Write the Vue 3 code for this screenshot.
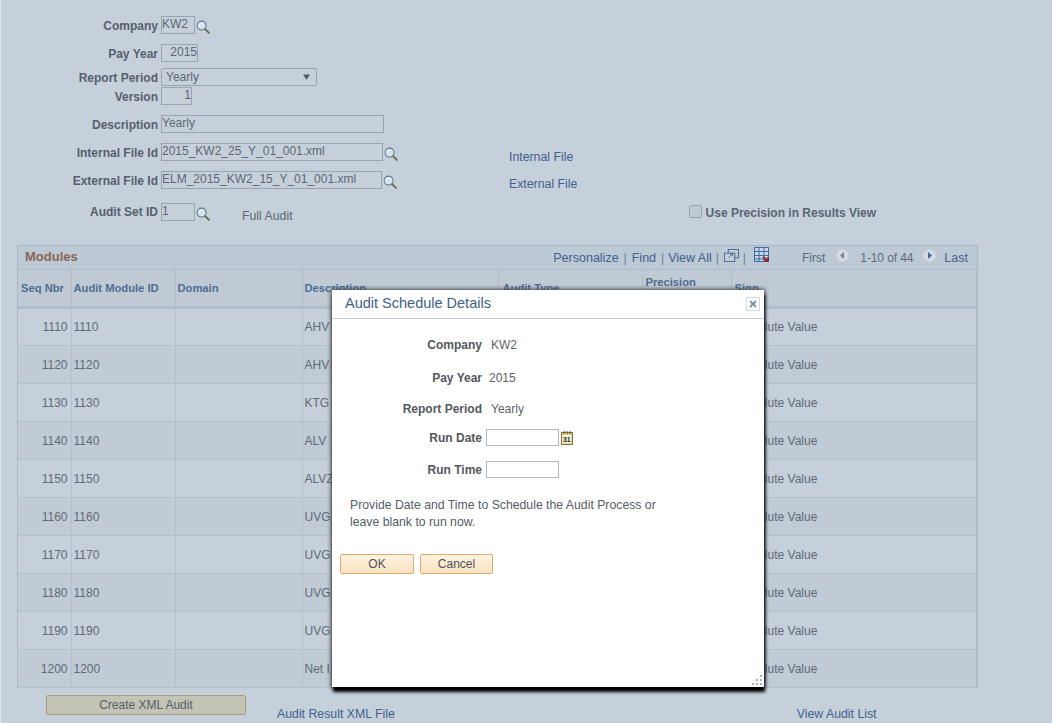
<script setup>
import { ref } from 'vue'

const rows = ref([
  { seq: 1110, desc: 'AHV' },
  { seq: 1120, desc: 'AHV' },
  { seq: 1130, desc: 'KTG' },
  { seq: 1140, desc: 'ALV' },
  { seq: 1150, desc: 'ALVZ' },
  { seq: 1160, desc: 'UVG' },
  { seq: 1170, desc: 'UVG' },
  { seq: 1180, desc: 'UVG' },
  { seq: 1190, desc: 'UVG' },
  { seq: 1200, desc: 'Net I' },
])
</script>

<template>
  <div class="page">
    <!-- 图标定义 -->
    <svg class="defs" aria-hidden="true">
      <symbol id="lens" viewBox="0 0 15 15">
        <circle cx="6" cy="6" r="4.800" fill="#d3e2ee" stroke="#5f7486" stroke-width="1.100" />
        <path d="M3.500 5.500a3 3 0 0 1 3-2.500" fill="none" stroke="#f4f8fb" stroke-width="1" />
        <path d="M9.800 9.800l4 4" stroke="#5f6f45" stroke-width="2" stroke-linecap="round" />
      </symbol>
    </svg>

    <!-- 表单区 -->
    <div class="row r-company">
      <label class="lab">Company</label>
      <div class="field w34">KW2</div>
      <svg class="lens"><use href="#lens" /></svg>
    </div>
    <div class="row r-year">
      <label class="lab">Pay Year</label>
      <div class="field w37 num">2015</div>
    </div>
    <div class="row r-period">
      <label class="lab">Report Period</label>
      <div class="field w156 select">
        <span>Yearly</span>
        <svg class="arrow" viewBox="0 0 8 6"><path d="M0 0h8L4 6z" fill="#4f5a66" /></svg>
      </div>
    </div>
    <div class="row r-version">
      <label class="lab">Version</label>
      <div class="field w31 num">1</div>
    </div>
    <div class="row r-desc">
      <label class="lab">Description</label>
      <div class="field w223">Yearly</div>
    </div>
    <div class="row r-internal">
      <label class="lab">Internal File Id</label>
      <div class="field w222">2015_KW2_25_Y_01_001.xml</div>
      <svg class="lens"><use href="#lens" /></svg>
      <a class="link file-link internal">Internal File</a>
    </div>
    <div class="row r-external">
      <label class="lab">External File Id</label>
      <div class="field w221">ELM_2015_KW2_15_Y_01_001.xml</div>
      <svg class="lens"><use href="#lens" /></svg>
      <a class="link file-link external">External File</a>
    </div>
    <div class="row r-set">
      <label class="lab">Audit Set ID</label>
      <div class="field w34">1</div>
      <svg class="lens"><use href="#lens" /></svg>
      <span class="full-audit">Full Audit</span>
      <span class="check-wrap">
        <span class="check"></span>
        <span class="lab-inline">Use Precision in Results View</span>
      </span>
    </div>

    <!-- Modules 表格 -->
    <div class="grid">
      <div class="grid-bar">
        <span class="grid-title">Modules</span>
        <div class="grid-nav">
          <a class="link">Personalize</a><i class="sep">|</i>
          <a class="link">Find</a><i class="sep sep-r">|</i>
          <a class="link">View All</a><i class="sep sep-l">|</i>
          <svg class="nav-ico" viewBox="0 0 16 14">
            <rect x="4.500" y="0.500" width="11" height="9" fill="none" stroke="#46688f" />
            <rect x="0.500" y="4.500" width="11" height="9" fill="#c3cdd8" stroke="#46688f" />
            <path d="M5 9l4-4M6.500 5H9v2.500" fill="none" stroke="#46688f" />
          </svg>
          <i class="sep sep-l">|</i>
          <svg class="nav-grid" viewBox="0 0 16 16">
            <rect x="0.500" y="0.500" width="14" height="14" fill="#ccd6e2" stroke="#3f6aa6" />
            <path d="M0 4.500h15M0 8.500h15M0 12h15M5 0v15M10 0v15" stroke="#3f6aa6" />
            <path d="M9 10l4 3M14 10v4h-4" fill="none" stroke="#93202a" stroke-width="1.600" />
          </svg>
          <span class="pg first">First</span>
          <svg class="pg-ico prev" viewBox="0 0 15 15">
            <circle cx="7.500" cy="7.500" r="7" fill="#d2dae3" stroke="#b8c3ce" />
            <path d="M9 4v7L5 7.500z" fill="#7b8793" />
          </svg>
          <span class="pg count">1-10 of 44</span>
          <svg class="pg-ico next" viewBox="0 0 15 15">
            <circle cx="7.500" cy="7.500" r="7" fill="#d2dae3" stroke="#b8c3ce" />
            <path d="M6 4v7l4-3.500z" fill="#46688f" />
          </svg>
          <a class="link">Last</a>
        </div>
      </div>
      <table class="tbl">
        <colgroup>
          <col style="width: 53px" />
          <col style="width: 104px" />
          <col style="width: 127px" />
          <col style="width: 196px" />
          <col style="width: 144px" />
          <col style="width: 89px" />
          <col />
        </colgroup>
        <thead>
          <tr>
            <th class="th-seq">Seq Nbr</th>
            <th>Audit Module ID</th>
            <th>Domain</th>
            <th>Description</th>
            <th class="th-type">Audit Type</th>
            <th class="th-up">Precision</th>
            <th class="th-seq">Sign</th>
          </tr>
        </thead>
        <tbody>
          <tr v-for="(r, i) in rows" :key="r.seq" :class="{ odd: i % 2 === 1 }">
            <td class="seq">{{ r.seq }}</td>
            <td>{{ r.seq }}</td>
            <td></td>
            <td>{{ r.desc }}</td>
            <td></td>
            <td></td>
            <td class="sign">Absolute Value</td>
          </tr>
        </tbody>
      </table>
    </div>

    <!-- 底部按钮 -->
    <div class="foot">
      <button class="xml-btn">Create XML Audit</button>
      <a class="link foot-a">Audit Result XML File</a>
      <a class="link foot-b">View Audit List</a>
    </div>

    <!-- 弹窗 -->
    <div class="dialog">
      <div class="dlg-head">
        <span class="dlg-title">Audit Schedule Details</span>
        <span class="dlg-close">
          <svg viewBox="0 0 8 8" width="8" height="8"><path d="M1 1l6 6M7 1l-6 6" stroke="#7d8fa3" stroke-width="1.800" /></svg>
        </span>
      </div>
      <div class="dlg-body">
        <div class="d-row m16">
          <label class="d-lab">Company</label><span class="d-val">KW2</span>
        </div>
        <div class="d-row m14">
          <label class="d-lab">Pay Year</label><span class="d-val year">2015</span>
        </div>
        <div class="d-row m12">
          <label class="d-lab">Report Period</label><span class="d-val">Yearly</span>
        </div>
        <div class="d-row m15">
          <label class="d-lab">Run Date</label><input class="d-input" />
          <svg class="cal" viewBox="0 0 12 14">
            <rect x="0.500" y="1.500" width="11" height="12" fill="#e3cf95" stroke="#8a7440" />
            <rect x="1.500" y="4" width="8.500" height="8" fill="#fdf7df" />
            <path d="M3 0v3M6 0v3M9 0v3" stroke="#5b4a22" />
            <text x="5.800" y="10.800" text-anchor="middle" class="cal-num">31</text>
          </svg>
        </div>
        <div class="d-row">
          <label class="d-lab">Run Time</label><input class="d-input" />
        </div>
        <p class="d-note">Provide Date and Time to Schedule the Audit Process or<br />leave blank to run now.</p>
        <div class="d-btns">
          <button class="d-btn ok">OK</button>
          <button class="d-btn cancel">Cancel</button>
        </div>
      </div>
      <svg class="grip" viewBox="0 0 12 12" width="12" height="12">
        <path d="M9 1h2v2H9zM5 5h2v2H5zM9 5h2v2H9zM1 9h2v2H1zM5 9h2v2H5zM9 9h2v2H9z" fill="#a9b1ba" />
      </svg>
    </div>
  </div>
</template>

<style scoped>
.page {
  position: relative;
  height: 723px;
  overflow: hidden;
  box-sizing: border-box;
  border-left: 1px solid #e2e6ea;
  background: #c6d0da;
  font-family: "Liberation Sans", Arial, sans-serif;
  font-size: 12px;
  color: #5c6775;
}

.defs {
  position: absolute;
  width: 0;
  height: 0;
}

.row {
  display: flex;
  align-items: center;
  height: 18px;
}

.r-company { padding-top: 16px; }
.r-year { margin-top: 10px; }
.r-period { margin-top: 6px; }
.r-version { margin-top: 1px; }
.r-desc { margin-top: 10px; }
.r-internal { margin-top: 10px; }
.r-external { margin-top: 10px; }
.r-set { margin-top: 14px; }

.lab {
  width: 160px;
  padding: 2px 3px 0 0;
  box-sizing: border-box;
  text-align: right;
  font-weight: bold;
  color: #565f6d;
}

.r-set .lab {
  padding-top: 0;
}

.field {
  height: 18px;
  box-sizing: border-box;
  border: 1px solid #98a4b0;
  line-height: 14px;
  color: #5c6775;
  white-space: nowrap;
}

.w31 { width: 31px; }
.w34 { width: 34px; }
.w37 { width: 37px; }
.w156 { width: 156px; }
.w221 { width: 221px; }
.w222 { width: 222px; }
.w223 { width: 223px; }

.num {
  text-align: right;
}

.select {
  display: flex;
  align-items: center;
  justify-content: space-between;
  border-radius: 2px;
  padding: 0 6px 0 4px;
}

.arrow {
  width: 7px;
  height: 6px;
}

.lens {
  width: 14px;
  height: 14px;
  margin: 3px 0 0 1px;
}

.link {
  font-size: 12.300px;
  color: #40608f;
  white-space: nowrap;
}

.file-link {
  align-self: flex-start;
  padding-top: 7px;
}

.internal {
  margin-left: 111px;
}

.external {
  margin-left: 112px;
  padding-top: 6px;
}

.full-audit {
  align-self: flex-start;
  margin-left: 32px;
  padding-top: 6px;
  font-size: 12.300px;
  white-space: nowrap;
}

.check-wrap {
  display: flex;
  align-items: center;
  margin-left: 396px;
  padding-top: 2px;
}

.check {
  width: 11px;
  height: 11px;
  margin-bottom: 4px;
  border: 1px solid #98a3ae;
  border-radius: 2px;
  background: #c1cad4;
}

.lab-inline {
  margin-left: 4px;
  font-weight: bold;
  white-space: nowrap;
  color: #5a6472;
}

.grid {
  width: 961px;
  margin: 24px 0 0 16px;
  box-sizing: border-box;
  border: 1px solid #aab7c4;
  border-bottom: none;
}

.grid-bar {
  display: flex;
  align-items: center;
  justify-content: space-between;
  height: 23px;
  background: #bdc9d4;
}

.grid-title {
  margin: 0 0 3px 7px;
  font-size: 13px;
  font-weight: bold;
  color: #8a6654;
}

.grid-nav {
  display: flex;
  align-items: center;
  margin-right: 9px;
}

.grid-nav .link {
  font-size: 12.500px;
}

.sep {
  margin: 0 5px;
  font-style: normal;
  color: #6d8099;
}

.sep.sep-l {
  margin-left: 4px;
}

.sep.sep-r {
  margin-right: 4px;
}

.nav-ico {
  width: 15px;
  height: 13px;
  margin-bottom: 5px;
}

.nav-grid {
  width: 16px;
  height: 16px;
  margin: 0 0 5px 3px;
}

.pg {
  white-space: nowrap;
  color: #5c6b7c;
}

.first {
  margin-left: 32px;
}

.count {
  letter-spacing: -0.100px;
}

.pg-ico {
  width: 15px;
  height: 15px;
  margin: 0 10px 5px 9px;
}

.pg-ico.prev {
  margin-left: 10px;
}

.pg-ico.next {
  margin-right: 7px;
}

.tbl {
  width: 100%;
  border-collapse: collapse;
  table-layout: fixed;
}

.tbl th {
  height: 38px;
  padding: 0 2px;
  box-sizing: border-box;
  border-top: 1px solid #b0bdc9;
  border-right: 1px solid #b0bdc9;
  border-bottom: 3px solid #b0bdc9;
  background: #bfcad5;
  text-align: left;
  font-size: 11.200px;
  white-space: nowrap;
  color: #4e6c92;
}

.tbl th.th-seq {
  padding-left: 3px;
}

.tbl th.th-type {
  padding-left: 4px;
}

.tbl th.th-up {
  padding: 0 3px 12px;
}

.tbl td {
  height: 38px;
  padding: 0 2px;
  box-sizing: border-box;
  border-right: 1px solid #b4c0cc;
  border-bottom: 1px solid #b4c0cc;
  white-space: nowrap;
  color: #5f6a78;
}

.tbl tr.odd td {
  background: #c0cbd5;
}

.tbl td.seq {
  padding-right: 3px;
  text-align: right;
}

.tbl td.sign {
  padding-left: 6px;
}

.foot {
  display: flex;
  align-items: flex-start;
  padding: 7px 0 0 45px;
}

.xml-btn {
  width: 200px;
  height: 20px;
  padding: 0;
  box-sizing: border-box;
  border: 1px solid #ab9b83;
  border-radius: 2px;
  background: #c3c4b6;
  font: 12px "Liberation Sans", Arial, sans-serif;
  color: #555d68;
}

.foot-a {
  margin: 12px 0 0 31px;
}

.foot-b {
  margin: 12px 0 0 402px;
}

.dialog {
  position: absolute;
  left: 331px;
  top: 290px;
  width: 432px;
  height: 397px;
  background: #fff;
  box-shadow: 1px 5px 3px #000, 0 0 4px 1px #444;
}

.dlg-head {
  display: flex;
  align-items: flex-start;
  justify-content: space-between;
  height: 28px;
  border-bottom: 1px solid #c4cbd3;
}

.dlg-title {
  margin: 5px 0 0 13px;
  font-size: 14.500px;
  color: #40608f;
}

.dlg-close {
  display: flex;
  align-items: center;
  justify-content: center;
  width: 12px;
  height: 12px;
  margin: 7px 4px 0 0;
  border: 1px solid #d5dadf;
}

.dlg-body {
  padding-top: 17px;
}

.d-row {
  display: flex;
  align-items: center;
  height: 17px;
}

.m12 { margin-bottom: 12px; }
.m14 { margin-bottom: 14px; }
.m15 { margin-bottom: 15px; }
.m16 { margin-bottom: 16px; }

.d-lab {
  width: 150px;
  text-align: right;
  font-weight: bold;
  color: #55585f;
}

.d-val {
  margin-left: 9px;
  color: #5f5f66;
}

.d-val.year {
  margin-left: 7px;
}

.d-input {
  width: 73px;
  height: 17px;
  margin: 0 0 0 4px;
  padding: 0;
  box-sizing: border-box;
  border: 1px solid #b5b9be;
}

.cal {
  width: 12px;
  height: 14px;
  margin-left: 2px;
}

.cal-num {
  font-family: "Liberation Sans", Arial, sans-serif;
  font-size: 7px;
  font-weight: bold;
  fill: #222;
}

.d-note {
  margin: 19px 0 0 18px;
  font-size: 12.250px;
  line-height: 17px;
  color: #565c68;
}

.d-btns {
  display: flex;
  gap: 6px;
  margin: 23px 0 0 8px;
}

.d-btn {
  height: 20px;
  padding: 0;
  box-sizing: border-box;
  border: 1px solid #dba971;
  border-radius: 2px;
  background: linear-gradient(#fdf2de, #fbe3c0);
  font: 12px "Liberation Sans", Arial, sans-serif;
  color: #4b5160;
}

.ok {
  width: 74px;
}

.cancel {
  width: 73px;
}

.grip {
  position: absolute;
  right: 1px;
  bottom: 1px;
}
</style>

<style>
html,
body {
  margin: 0;
  background: #c6d0da;
}
</style>
